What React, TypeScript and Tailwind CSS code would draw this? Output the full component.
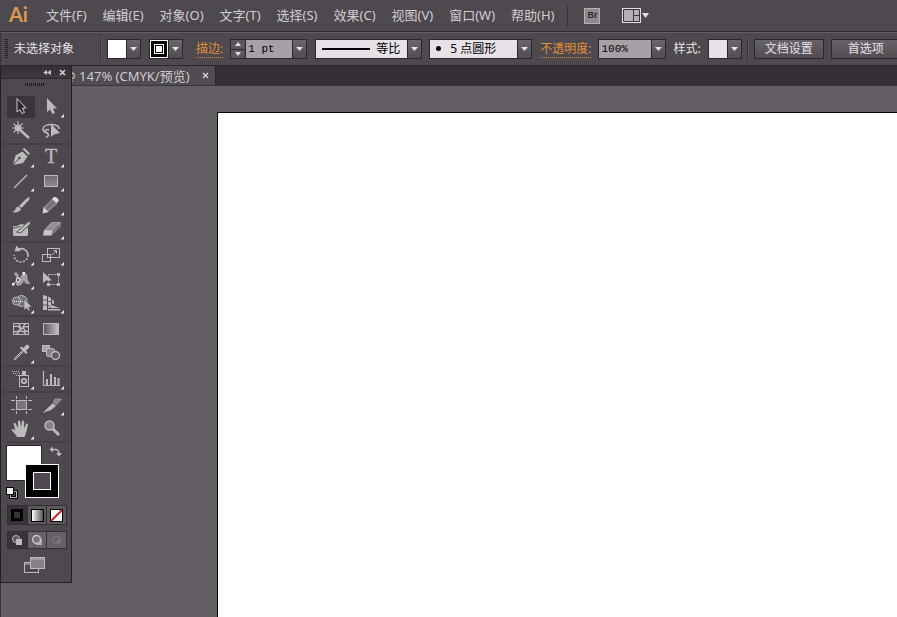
import React from 'react';

const menus = ['文件(F)', '编辑(E)', '对象(O)', '文字(T)', '选择(S)', '效果(C)', '视图(V)', '窗口(W)', '帮助(H)'];

type Tool = {
  name: string;
  more?: boolean;
  icon: React.ReactNode;
};

const C = '#bdbabe';

const toolGroups: Tool[][] = [
  [
    {
      name: '选择工具',
      icon: <path d="M11 3.5V17l3-2.5 2 4 2.5-1-2-4.5H20z" fill="#2a262b" stroke="#cfccd0" />,
    },
    {
      name: '直接选择工具',
      more: true,
      icon: <path d="M11 3v14l3-2.5 2.5 4.5 2.5-1-2-4.5h4z" fill={C} />,
    },
    {
      name: '魔棒工具',
      icon: (
        <g stroke={C}>
          <path d="M13 10l10 9" strokeWidth="2.5" />
          <path d="M12 2v13M6 9h12M7.5 4.5l9 9M16.5 4.5l-9 9" strokeWidth="1.2" />
          <circle cx="12" cy="9" r="3" fill={C} />
        </g>
      ),
    },
    {
      name: '套索工具',
      icon: (
        <g>
          <path d="M12 14c-3.5-.5-5-2-5-4 0-6 17-6 16 0M13 11c-3-1.5-5 .5-3 2.5 1 1 3 1 2.5 3L10 18.5" fill="none" stroke={C} strokeWidth="1.5" />
          <path d="M15 5v13l3-2.500L24 14z" fill={C} />
        </g>
      ),
    },
  ],
  [
    {
      name: '钢笔工具',
      more: true,
      icon: (
        <g>
          <path d="M7 20l2.5-9.5 7-4 5 5-4.5 6.500z" fill={C} />
          <path d="M16.5 4l2-1 5.5 5.5-1.5 1.5z" fill={C} />
          <path d="M7 20l6-6.5" stroke="#4d494e" />
          <circle cx="13.5" cy="13" r="1.3" fill="#4d494e" />
        </g>
      ),
    },
    {
      name: '文字工具',
      more: true,
      icon: (
        <text x="15" y="18" textAnchor="middle" fontSize="20" fill={C} stroke={C} strokeWidth="0.3" className="font-['Liberation_Serif',serif]">
          T
        </text>
      ),
    },
    { name: '直线段工具', more: true, icon: <path d="M8 19L21 6" stroke={C} strokeWidth="1.3" /> },
    { name: '矩形工具', more: true, icon: <rect x="8.5" y="6.5" width="13" height="11" fill="url(#shade)" stroke={C} /> },
    {
      name: '画笔工具',
      icon: (
        <g fill={C}>
          <path d="M24 4l-1 3-7.5 8-2.5-2 8-8z" />
          <path d="M12.5 13.5l2.5 2.5c-1 3-5 4-9 3 2-.5 3-1.5 3.5-3 .5-1.5 1.5-2.5 3-2.5z" />
        </g>
      ),
    },
    {
      name: '铅笔工具',
      more: true,
      icon: (
        <g>
          <path d="M7.500 19l1-5 8-8 4.500 4.500-9 8z" fill="#7f7b80" stroke="#a19da2" strokeWidth="0.8" />
          <path d="M16 6l2-2h2l2.5 2.5v2L20.5 10z" fill="#dedbdf" />
          <path d="M6.5 20.5l1-6.5 5 5z" fill="#d3d0d4" />
          <path d="M11 15.5l7-7" stroke="#59555a" />
        </g>
      ),
    },
    {
      name: '斑点画笔工具',
      icon: (
        <g>
          <path d="M7 9h4c2-2 6-2.500 9-1l2 3v7l-1 1H8l-1-1z" fill={C} />
          <path d="M7 11c3 0 5-1.500 7-1.500" stroke="#4d494e" fill="none" />
          <path d="M25 3.500l-1 4-7 6c-1.500 2.500-4 2.500-6.500 1.500 2-.5 2-2.500 4.500-3.500l6-6z" fill={C} stroke="#4d494e" />
        </g>
      ),
    },
    {
      name: '橡皮擦工具',
      more: true,
      icon: (
        <g>
          <path d="M8 13.5l7.500-8H24l-7.5 8z" fill="#918d92" stroke={C} strokeWidth="0.7" />
          <path d="M8 13.5h8.5l-1.500 5H7z" fill="#cbc8cc" />
          <path d="M16.5 13.5l7.5-8v4l-9 9z" fill="#6f6b70" stroke={C} strokeWidth="0.7" />
        </g>
      ),
    },
  ],
  [
    {
      name: '旋转工具',
      more: true,
      icon: (
        <g>
          <path d="M12 6.500c5-2.500 10 1 10 5.500" fill="none" stroke={C} strokeWidth="1.6" />
          <path d="M22 12c0 4-3 7-7 7s-7-3-7-7" fill="none" stroke={C} strokeWidth="1.6" strokeDasharray="2 1.500" />
          <path d="M8.500 8.500l2-6L15 8z" fill={C} />
        </g>
      ),
    },
    {
      name: '比例缩放工具',
      more: true,
      icon: (
        <g fill="none" stroke={C}>
          <rect x="11.5" y="5.5" width="12" height="9" />
          <rect x="6.5" y="11.5" width="8" height="7" />
          <path d="M16 12l4.5-4.5M17.5 7.5h3v3" />
        </g>
      ),
    },
    {
      name: '宽度工具',
      more: true,
      icon: (
        <g>
          <path d="M7.5 6c4-1.500 5 1 5.500 4 .5 3 2 2 3-1s4-4 5-1c.7 2.500 0 6 3.500 8.500-4 1.500-6-.5-6.500-3-1.500 4-4.500 6-7 5s0-3-.5-6-1-4.500-3-6.500z" fill="#a5a1a6" />
          <path d="M7 17l5-4 6-6.500" stroke="#d3d0d4" />
          <path d="M6 16h2.5v2.5H6zM16.500 5H19v2.500h-2.500z" fill="#eee" />
          <circle cx="12" cy="13" r="1.8" fill="#4d494e" stroke="#eee" />
        </g>
      ),
    },
    {
      name: '自由变换工具',
      icon: (
        <g>
          <rect x="12.5" y="7.5" width="10" height="10" fill="none" stroke={C} strokeDasharray="2 1" />
          <path d="M21 6h3v3h-3zM21 16h3v3h-3zM11 16h3v3h-3z" fill={C} />
          <path d="M7 5v11l3-2.5h6z" fill={C} />
        </g>
      ),
    },
    {
      name: '形状生成器工具',
      more: true,
      icon: (
        <g>
          <circle cx="15.5" cy="10" r="5.5" fill="#77737a" stroke={C} />
          <circle cx="10.5" cy="10" r="4" fill="#77737a" stroke={C} />
          <path d="M8 10.5h10" stroke="#eee" strokeDasharray="1 1" />
          <path d="M18 8v11l2.5-2 2 3 1.5-1-1.5-3H26z" fill={C} stroke="#4d494e" strokeWidth="0.5" />
        </g>
      ),
    },
    {
      name: '透视网格工具',
      more: true,
      icon: (
        <g fill={C}>
          <path d="M7 4l4 1v14H7z" />
          <path d="M12 5.500l3 1.500v7l8.500 3H12z" />
          <path d="M12 18h12v1.500H12z" />
          <path d="M16 8.500l2 1.500v3l-2-.500z" />
          <path d="M7 9h4M7 14h4M12 10.500h3M15 16.500l-3-2.500" stroke="#4d494e" strokeWidth="0.8" />
        </g>
      ),
    },
  ],
  [
    {
      name: '网格工具',
      icon: (
        <g fill="none" stroke={C} strokeWidth="1.4">
          <rect x="7.5" y="6.5" width="15" height="11" strokeWidth="1" />
          <path d="M8 9.500c4-1 6 1 6.500 3s3 3 7.500 1.500M8 14.500c3 1 5-1 6.500-2s4-4 7.500-2.500M12.500 7c2.500 2 2.500 3.500 2 5.500s-2 3-4 4.500M19.500 7c-3 1.500-2.500 4-1 6s1 3 0 4.500" />
        </g>
      ),
    },
    { name: '渐变工具', icon: <rect x="7.5" y="6.5" width="15" height="11" fill="url(#fade)" stroke={C} /> },
    {
      name: '吸管工具',
      more: true,
      icon: (
        <g>
          <path d="M16.5 9.5L9 17l-1 2 2-1 7.5-7.5" fill="#77737a" stroke={C} />
          <path d="M14 7l1.5-1.5 2 1.5L20 4c2-1 4 1 3 3l-3 2.5 1.5 2L20 13z" fill={C} />
        </g>
      ),
    },
    {
      name: '混合工具',
      icon: (
        <g stroke={C}>
          <rect x="6.5" y="4.5" width="7" height="6" fill="#aaa6ab" />
          <rect x="10.5" y="7.5" width="8" height="8" rx="2" fill="#89858a" />
          <circle cx="19.5" cy="14.5" r="4" fill="#5e5a5f" strokeWidth="1.5" />
        </g>
      ),
    },
  ],
  [
    {
      name: '符号喷枪工具',
      more: true,
      icon: (
        <g>
          <rect x="13.5" y="8.5" width="9" height="11" fill="none" stroke={C} />
          <path d="M16 4h4v4h-4z" fill={C} />
          <circle cx="18" cy="14" r="2.2" fill="none" stroke={C} strokeWidth="1.8" />
          <path d="M6 4.5h8M7 6.5h7M10 8.5h3" stroke={C} strokeDasharray="1 1" />
        </g>
      ),
    },
    {
      name: '柱形图工具',
      more: true,
      icon: (
        <g fill="none" stroke={C}>
          <path d="M7.5 4v14.5H24" strokeWidth="1.2" />
          <path d="M11 18v-6M15 18V7M19 18v-8M22.5 18v-7" strokeWidth="2" />
        </g>
      ),
    },
  ],
  [
    {
      name: '画板工具',
      icon: (
        <g stroke={C}>
          <rect x="10.5" y="7.5" width="10" height="9" fill="#79757a" />
          <path d="M10.5 3v3M20.5 3v3M10.5 18v3M20.5 18v3M5 7.5h4M5 16.5h4M22 7.5h4M22 16.5h4" />
        </g>
      ),
    },
    {
      name: '切片工具',
      more: true,
      icon: (
        <g>
          <path d="M17.5 9l1.500-3h6.500L20.5 12z" fill="#8a868b" stroke="#a19da2" strokeWidth="0.7" />
          <path d="M6.5 20l10.5-10 3 3-5 4z" fill={C} />
        </g>
      ),
    },
    {
      name: '抓手工具',
      more: true,
      icon: (
        <path
          d="M11 20c-1-3-4-4.5-5.500-7.500 1-1 3 0 4 1.500L7.500 7c0-1.500 2-1.500 2.500 0l2 4V4.500c0-1.500 2-1.500 2.300 0l.7 6 1-6c.5-1.500 2.200-1 2.200.5L18 11.500l2-4.500c1-1.200 2.200-.5 2 .8L20.500 14c-.5 2-1 4-2 6z"
          fill={C}
        />
      ),
    },
    {
      name: '缩放工具',
      icon: (
        <g>
          <path d="M17 12l6 6" stroke={C} strokeWidth="3" />
          <circle cx="13.5" cy="8.5" r="4.5" fill="#858186" stroke={C} strokeWidth="1.5" />
        </g>
      ),
    },
  ],
];

function ToolButton({ tool, active }: { tool: Tool; active: boolean }) {
  return (
    <button
      aria-label={tool.name}
      className={active ? 'h-6 border border-transparent bg-[#39353a] bg-clip-padding' : 'h-6 border border-transparent'}
    >
      <svg viewBox="0 0 30 24" width="30" height="24" className="-m-px" fill="none">
        {tool.icon}
        {tool.more && <path d="M28 19v3.5h-3.5z" fill="#e6e4e7" />}
      </svg>
    </button>
  );
}

function Arrow() {
  return (
    <span className="pointer-events-none flex w-3.5 items-center justify-center self-stretch border-l border-[#2b272c] bg-linear-to-b from-[#6a666b] to-[#504c51]">
      <svg viewBox="0 0 7 4" width="7" height="4">
        <path d="M0 0h7L3.5 4z" fill="#e3e1e4" />
      </svg>
    </span>
  );
}

function Swatch({ label, children }: { label: string; children: React.ReactNode }) {
  return (
    <button aria-label={label} className="flex h-5 w-[34px] shrink-0 border border-[#2b272c]">
      <span className="flex h-full flex-1 items-center justify-center">{children}</span>
      <Arrow />
    </button>
  );
}

function Separator() {
  return <span className="h-6 w-0.5 shrink-0 border-l border-r border-l-[#3a363b] border-r-[#5c585d]" />;
}

function MenuBar() {
  return (
    <nav className="flex h-8 shrink-0 items-center border-b border-[#2e2a2f] pl-[9px] text-[13px] text-[#d0cdd1]">
      <span className="w-8 pb-1 font-[Lato,sans-serif] text-xl leading-5 font-bold text-[#dc9a4c]">Ai</span>
      <div className="flex gap-1.5">
        {menus.map((m) => (
          <button key={m} className="px-[5px] whitespace-nowrap">
            {m}
          </button>
        ))}
      </div>
      <span className="ml-2 h-5 w-px bg-[#37333a]" />
      <button className="ml-4 flex h-4 w-4 items-center justify-center border border-[#b5b1b6] bg-[#8d898e] font-['Liberation_Sans',sans-serif] text-[9px] font-bold text-[#2f2b30]">
        Br
      </button>
      <button aria-label="排列文档" className="ml-[22px]">
        <svg viewBox="0 0 28 16" width="28" height="16">
          <rect x="1" y="1" width="17" height="13" fill="#b4b0b5" />
          <rect x="0.5" y="0.5" width="18" height="14" fill="none" stroke="#e0dee1" />
          <path d="M1.5 1.5h16v12h-16zM11.5 2v11M12 7.5h5.5" fill="none" stroke="#3a363b" />
          <path d="M20 5h7l-3.5 5z" fill="#e3e1e4" />
        </svg>
      </button>
    </nav>
  );
}

function OptionsBar() {
  return (
    <div className="flex h-[34px] shrink-0 items-center overflow-hidden border-t border-b border-l border-t-[#625e63] border-b-[#2b272c] border-l-[#39353a] pl-1 text-xs whitespace-nowrap text-[#e4e2e5]">
      <span className="h-5 w-[3px] shrink-0 bg-[repeating-linear-gradient(#252126_0_1px,transparent_1px_2px)]" />
      <span className="ml-1.5 w-[86px] shrink-0">未选择对象</span>
      <Separator />
      <div className="ml-[5px] flex shrink-0 items-center gap-2">
        <Swatch label="填色">
          <span className="h-full w-full bg-white" />
        </Swatch>
        <Swatch label="描边">
          <span className="flex h-full w-full items-center justify-center border border-white bg-black">
            <span className="flex h-2.5 w-2.5 items-center justify-center border border-white bg-black">
              <span className="h-1.5 w-1.5 bg-white" />
            </span>
          </span>
        </Swatch>
      </div>
      <label htmlFor="stroke" className="ml-[13px] shrink-0 border-b border-dotted border-[#d98a35] leading-4 text-[#e08e36]">
        描边:
      </label>
      <div className="ml-[7px] flex h-5 w-[77px] shrink-0 border border-[#2b272c]">
        <div className="flex w-[15px] flex-col border-r border-[#2b272c] bg-[#5b575c]">
          <button aria-label="增大" className="flex flex-1 items-center justify-center border-b border-[#2b272c]">
            <svg viewBox="0 0 6 4" width="6" height="4">
              <path d="M0 4h6L3 0z" fill="#e3e1e4" />
            </svg>
          </button>
          <button aria-label="减小" className="flex flex-1 items-center justify-center">
            <svg viewBox="0 0 6 4" width="6" height="4">
              <path d="M0 0h6L3 4z" fill="#e3e1e4" />
            </svg>
          </button>
        </div>
        <input
          id="stroke"
          defaultValue="1 pt"
          className="min-w-0 flex-1 bg-[#a5a1a6] pl-0.5 font-['Liberation_Mono',monospace] text-[11px] text-black outline-none"
        />
        <Arrow />
      </div>
      <div className="relative ml-2 flex h-5 w-[107px] shrink-0 border border-[#2b272c]">
        <select aria-label="变量宽度配置文件" className="min-w-0 flex-1 appearance-none bg-[#e6e2e7] pl-[60px] text-black outline-none">
          <option>等比</option>
        </select>
        <span className="pointer-events-none absolute top-2 left-1.5 h-0.5 w-12 bg-black" />
        <Arrow />
      </div>
      <div className="relative ml-[7px] flex h-5 w-[103px] shrink-0 border border-[#2b272c]">
        <select aria-label="画笔定义" className="min-w-0 flex-1 appearance-none bg-[#e6e2e7] pl-5 text-black outline-none">
          <option>5 点圆形</option>
        </select>
        <span className="pointer-events-none absolute top-1.5 left-1.5 h-[5px] w-[5px] rounded-full bg-black" />
        <Arrow />
      </div>
      <label htmlFor="opacity" className="ml-2 shrink-0 border-b border-dotted border-[#d98a35] leading-4 text-[#e08e36]">
        不透明度:
      </label>
      <div className="ml-[7px] flex h-5 w-[68px] shrink-0 border border-[#2b272c]">
        <select
          id="opacity"
          className="min-w-0 flex-1 appearance-none bg-[#a5a1a6] pl-0.5 font-['Liberation_Mono',monospace] text-[11px] text-black outline-none"
        >
          <option>100%</option>
        </select>
        <Arrow />
      </div>
      <span className="mx-[7px] shrink-0">样式:</span>
      <Swatch label="图形样式">
        <span className="h-full w-full bg-[#e6e2e7]" />
      </Swatch>
      <div className="mx-[5px] flex shrink-0">
        <Separator />
      </div>
      <div className="flex shrink-0 gap-[7px]">
        <button className="h-5 w-[70px] border border-[#2b272c] bg-linear-to-b from-[#676368] to-[#504c51] leading-4">文档设置</button>
        <button className="h-5 w-[70px] border border-[#2b272c] bg-linear-to-b from-[#676368] to-[#504c51] leading-4">首选项</button>
      </div>
    </div>
  );
}

function ToolPanel() {
  return (
    <aside className="absolute top-0 left-0 flex w-[72px] flex-col border border-t-0 border-[#232024] bg-[#4d494e] pb-2">
      <svg width="0" height="0" className="absolute">
        <defs>
          <linearGradient id="shade" x1="0" y1="0" x2="0" y2="1">
            <stop offset="0" stopColor="#6d696e" />
            <stop offset="1" stopColor="#8f8b90" />
          </linearGradient>
          <linearGradient id="fade">
            <stop offset="0" stopColor="#59555a" />
            <stop offset="1" stopColor="#c4c1c5" />
          </linearGradient>
        </defs>
      </svg>
      <header className="flex h-[13px] items-center justify-end gap-2 border-b border-[#2b272c] bg-linear-to-b from-[#342f35] to-[#3d393e] pr-[5px]">
        <button aria-label="折叠">
          <svg viewBox="0 0 8 5" width="8" height="5">
            <path d="M4 0v5L0 2.5zM8 0v5L4 2.5z" fill="#c9c6ca" />
          </svg>
        </button>
        <button aria-label="关闭">
          <svg viewBox="0 0 7 7" width="7" height="7">
            <path d="M1 1l5 5M6 1L1 6" stroke="#d8d5d9" strokeWidth="1.5" />
          </svg>
        </button>
      </header>
      <span className="mt-1 mb-[9px] ml-6 h-[3px] w-5 bg-[repeating-linear-gradient(90deg,#1b181c_0_1px,transparent_1px_2px)]" />
      <div className="mx-[5px]">
        {toolGroups.map((group, g) => (
          <div key={g} className="grid grid-cols-2 border-b-2 border-[#444045]">
            {group.map((tool, i) => (
              <ToolButton key={tool.name} tool={tool} active={g === 0 && i === 0} />
            ))}
          </div>
        ))}
      </div>
      <button aria-label="填色和描边" className="mx-[5px] mt-0.5">
        <svg viewBox="0 0 60 54" width="60" height="54">
          <rect x="0.5" y="0.5" width="35" height="35" fill="#fff" stroke="#2b272c" />
          <rect x="19.5" y="19.5" width="33" height="33" fill="#000" stroke="#fff" />
          <rect x="27.5" y="27.5" width="17" height="17" fill="#4d494e" stroke="#fff" />
          <path d="M46 4.5h3c3 0 4 1 4 4" fill="none" stroke={C} strokeWidth="1.3" />
          <path d="M43.5 4.5l3.5-3v6zM53 11.500l-3-3.500h6z" fill={C} />
          <rect x="4.5" y="46.5" width="6" height="6" fill="none" stroke="#000" strokeWidth="3" />
          <rect x="4.5" y="46.5" width="6" height="6" fill="none" stroke={C} />
          <rect x="0.5" y="42.5" width="7" height="7" fill="#eee" stroke="#000" />
        </svg>
      </button>
      <div className="mt-1.5 mr-1 ml-1.5 flex h-5 border border-[#332f34]">
        <button aria-label="颜色" className="flex flex-1 items-center justify-center bg-[#373338]">
          <span className="h-3 w-3 border-3 border-black bg-[#373338]" />
        </button>
        <button aria-label="渐变" className="flex flex-1 items-center justify-center border-x border-[#332f34] bg-[#5b575c]">
          <span className="h-[13px] w-[13px] border border-black bg-linear-to-r from-white to-[#555]" />
        </button>
        <button aria-label="无" className="flex flex-1 items-center justify-center bg-[#5b575c]">
          <svg viewBox="0 0 13 13" width="13" height="13">
            <rect x="0.5" y="0.5" width="12" height="12" fill="#fff" stroke="#000" />
            <path d="M1 12L12 1" stroke="#c3262b" strokeWidth="2" />
          </svg>
        </button>
      </div>
      <div className="mt-1.5 mr-1 ml-1.5 flex h-[18px] border border-[#332f34]">
        <button aria-label="正常绘图" className="flex flex-1 items-center justify-center bg-[#373338]">
          <svg viewBox="0 0 12 12" width="12" height="12">
            <circle cx="5" cy="5" r="3.5" fill="#5b575c" stroke={C} />
            <rect x="5" y="5" width="6" height="6" fill={C} />
          </svg>
        </button>
        <button aria-label="背面绘图" className="flex flex-1 items-center justify-center border-x border-[#332f34] bg-[#656166]">
          <svg viewBox="0 0 12 12" width="12" height="12">
            <rect x="5" y="5" width="6" height="6" fill="#b0acb1" />
            <circle cx="5.5" cy="5.5" r="4" fill="#77737a" stroke="#c9c6ca" strokeWidth="1.3" />
          </svg>
        </button>
        <button aria-label="内部绘图" className="flex flex-1 items-center justify-center bg-[#656166]">
          <svg viewBox="0 0 12 12" width="12" height="12">
            <circle cx="6" cy="6" r="4" fill="none" stroke="#7b777c" />
            <path d="M6 6h4v1l-3 3H6z" fill="#7b777c" />
          </svg>
        </button>
      </div>
      <button aria-label="更改屏幕模式" className="mr-[25px] ml-auto mt-2">
        <svg viewBox="0 0 22 17" width="22" height="17">
          <rect x="0.5" y="5.5" width="14" height="10" fill="#4d494e" stroke={C} />
          <rect x="6.5" y="0.5" width="14" height="11" fill="#858186" stroke={C} />
          <path d="M7 2h13M1 7h6" stroke={C} />
        </svg>
      </button>
    </aside>
  );
}

export default function App() {
  return (
    <div className="flex h-screen flex-col overflow-hidden bg-[#4d494e] font-['Noto_Sans','Noto_Sans_CJK_SC',sans-serif]">
      <MenuBar />
      <OptionsBar />
      <main className="relative flex min-h-[516px] flex-1 flex-col bg-[#625e63]">
        <div className="flex h-5 shrink-0 items-stretch border-b border-[#39353a] bg-[#352f36]">
          <div className="flex items-center gap-3 border-r border-[#2b272c] bg-[#504c51] pr-1.5 pl-16 text-[13px] leading-4 text-[#cdcace]">
            <span className="whitespace-pre">@ 147% (CMYK/预览)</span>
            <button aria-label="关闭文档">
              <svg viewBox="0 0 7 7" width="7" height="7">
                <path d="M1 1l5 5M6 1L1 6" stroke="#d8d5d9" strokeWidth="1.3" />
              </svg>
            </button>
          </div>
        </div>
        <div className="flex flex-1 border-l border-[#39353a] pt-[26px] pl-[216px]">
          <div className="flex-1 border-t border-l border-black bg-white" />
        </div>
        <ToolPanel />
      </main>
    </div>
  );
}
